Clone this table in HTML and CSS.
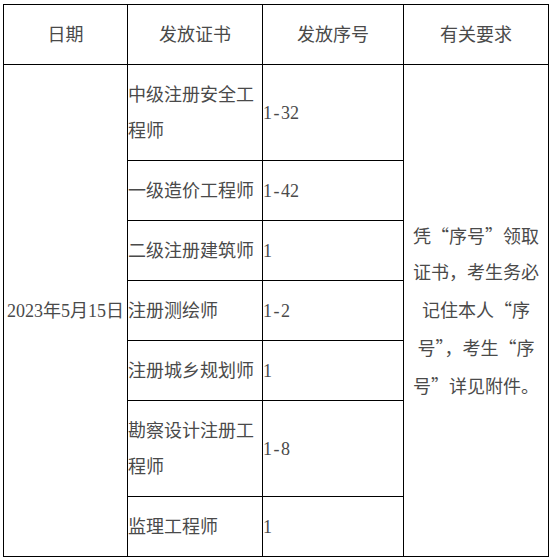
FILE: index.html
```html
<!DOCTYPE html>
<html lang="zh-CN">
<head>
<meta charset="utf-8">
<link rel="stylesheet" href="styles.css">
</head>
<body>
<table class="grid">
  <colgroup>
    <col class="c1"><col class="c2"><col class="c3"><col class="c4">
  </colgroup>
  <tr class="r60">
    <th>日期</th><th>发放证书</th><th>发放序号</th><th>有关要求</th>
  </tr>
  <tr class="r96">
    <td rowspan="7" class="date">2023年5月15日</td>
    <td class="cert">中级注册安全工程师</td>
    <td class="num">1<span class="dash">-</span>32</td>
    <td rowspan="7" class="note">凭<span class="q">“</span>序号<span class="q">”</span>领取<br>证书，考生务必<br>记住本人<span class="q">“</span>序<br>号<span class="q">”</span>，考生<span class="q">“</span>序<br>号<span class="q">”</span>详见附件。</td>
  </tr>
  <tr class="r60"><td class="cert">一级造价工程师</td><td class="num">1<span class="dash">-</span>42</td></tr>
  <tr class="r60"><td class="cert">二级注册建筑师</td><td class="num">1</td></tr>
  <tr class="r60"><td class="cert">注册测绘师</td><td class="num">1<span class="dash">-</span>2</td></tr>
  <tr class="r60"><td class="cert">注册城乡规划师</td><td class="num">1</td></tr>
  <tr class="r96"><td class="cert">勘察设计注册工程师</td><td class="num">1<span class="dash">-</span>8</td></tr>
  <tr class="r60"><td class="cert">监理工程师</td><td class="num">1</td></tr>
</table>
</body>
</html>
```
FILE: styles.css
```css
html, body {
  margin: 0;
  padding: 0;
  background: #fff;
}
body {
  padding: 4px 0 0 3px;
}
.grid {
  border-collapse: separate;
  border-spacing: 0;
  table-layout: fixed;
  width: 546px;
  border-left: 1px solid #000;
  border-top: 1px solid #000;
  font-family: "Liberation Serif", "Noto Sans CJK SC", serif;
  font-size: 18px;
  color: #4a4a4a;
}
.c1 { width: 124px; }
.c2 { width: 135px; }
.c3 { width: 141px; }
.c4 { width: 145px; }
.grid th, .grid td {
  border-right: 1px solid #000;
  border-bottom: 1px solid #000;
  padding: 0;
  vertical-align: middle;
  line-height: 36px;
  font-weight: normal;
}
.grid th { text-align: center; }
.r60 { height: 60px; }
.r96 { height: 96px; }
.date { text-align: center; }
.cert { text-align: left; padding-left: 2px; }
.num { text-align: left; padding-left: 2px; }
.dash { display: inline-block; width: 9px; text-align: center; }
.note { text-align: center; padding: 0 6px; }
.q { font-family: "Noto Sans CJK SC", sans-serif; }
```
